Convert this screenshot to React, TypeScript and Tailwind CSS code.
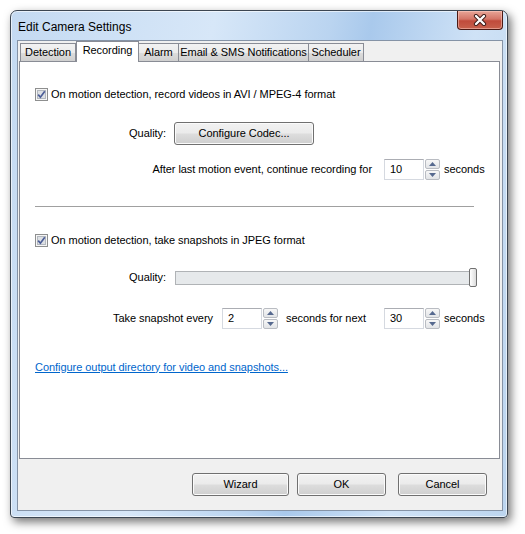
import React from "react";

const btnBg =
  "bg-[linear-gradient(to_bottom,#f2f2f2_0%,#ebebeb_48%,#dddddd_52%,#cfcfcf_100%)] shadow-[inset_0_0_0_1px_#fbfbfb]";

const CheckBox: React.FC = () => (
  <svg width="13" height="13" viewBox="0 0 13 13" className="shrink-0">
    <rect x="0.5" y="0.5" width="12" height="12" fill="#f6f6f6" stroke="#8e8f8f" />
    <rect x="2.5" y="2.5" width="8" height="8" fill="#dde0e4" stroke="#b3b8bf" />
    <path d="M3.2 6.6 L5.4 9.2 L9.8 3.2" fill="none" stroke="#4b5d97" strokeWidth="1.7" />
  </svg>
);

const Arrow: React.FC<{ up?: boolean }> = ({ up }) => (
  <svg width="7" height="4" viewBox="0 0 7 4">
    <path d={up ? "M0 4 L3.5 0 L7 4Z" : "M0 0 L3.5 4 L7 0Z"} fill="#56698f" />
  </svg>
);

const NumberField: React.FC<{ value: string }> = ({ value }) => (
  <div className="flex items-center">
    <div className="w-[40px] h-[21px] border border-[#d5d9e0] border-t-[#abadb3] bg-white flex items-center pl-[5px]">
      {value}
    </div>
    <div className="flex flex-col ml-[1px] w-[15px] h-[21px] gap-[1px]">
      <div className="flex-1 border border-[#b9bcc2] rounded-[2px] bg-[linear-gradient(to_bottom,#f7f7f7,#e2e4e7)] flex items-center justify-center">
        <Arrow up />
      </div>
      <div className="flex-1 border border-[#b9bcc2] rounded-[2px] bg-[linear-gradient(to_bottom,#f7f7f7,#e2e4e7)] flex items-center justify-center">
        <Arrow />
      </div>
    </div>
  </div>
);

const tabs = ["Detection", "Recording", "Alarm", "Email & SMS Notifications", "Scheduler"];
const tabWidths = [56, 63, 41, 131, 56];

export default function App() {
  return (
    <div className="w-[525px] h-[534px] bg-white pt-[10px] pl-[10px] font-['Liberation_Sans',Arial,sans-serif] text-[11px] tracking-[-0.05px] text-black">
      <div className="w-[498px] h-[508px] border border-[#3c4652] rounded-t-[7px] rounded-b-[4px] bg-[linear-gradient(100deg,#c4daf2_0%,#d7e7f8_35%,#bad4f0_55%,#a9c9ec_62%,#cfe2f6_80%,#bcd5ef_100%)] shadow-[3px_4px_10px_rgba(0,0,0,0.55),inset_0_0_0_1px_rgba(255,255,255,0.6)] flex flex-col">
        {/* title bar */}
        <div className="h-[29px] flex justify-between pl-[7px] pr-[4px]">
          <div className="text-[12px] tracking-normal self-center pt-[2px] text-black">Edit Camera Settings</div>
          <div className="w-[46px] h-[19px] border border-[#4b1a14] border-t-0 rounded-b-[4px] bg-[linear-gradient(to_bottom,#e8a597_0%,#d47567_45%,#c04b3b_55%,#c7614c_100%)] shadow-[inset_0_0_0_1px_rgba(255,210,200,0.5)] flex items-center justify-center">
            <svg width="14" height="12" viewBox="0 0 14 12">
              <path d="M3 2 L11 10 M11 2 L3 10" stroke="#3b1a16" strokeWidth="4.2" strokeLinecap="round" />
              <path d="M3 2 L11 10 M11 2 L3 10" stroke="#ffffff" strokeWidth="2.4" strokeLinecap="round" />
            </svg>
          </div>
        </div>

        {/* client */}
        <div className="flex-1 ml-[6px] mr-[4px] mb-[6px] border border-[#8593a6] bg-[#f0f0f0] flex flex-col pl-[1px] pr-[2px]">
          {/* tab strip */}
          <div className="h-[20px] flex items-end pl-[1px]">
            {tabs.map((t, i) =>
              i === 1 ? (
                <div
                  key={t}
                  style={{ width: tabWidths[i] }}
                  className="h-[21px] -mb-[1px] border border-b-0 border-[#898c95] bg-white flex items-center justify-center pb-[3px] relative z-10"
                >
                  {t}
                </div>
              ) : (
                <div
                  key={t}
                  style={{ width: tabWidths[i] }}
                  className="h-[18px] border border-b-0 border-[#898c95] -ml-[1px] first:ml-0 bg-[linear-gradient(to_bottom,#f2f2f2_0%,#ebebeb_50%,#dddddd_50%,#cfcfcf_100%)] flex items-center justify-center"
                >
                  {t}
                </div>
              )
            )}
          </div>

          {/* tab panel */}
          <div className="h-[398px] border border-[#898c95] bg-white flex flex-col pl-[15px]">
            <div className="mt-[26px] h-[13px] flex items-center gap-[3px]">
              <CheckBox />
              <span>On motion detection, record videos in AVI / MPEG-4 format</span>
            </div>

            <div className="mt-[21px] flex items-center -ml-[15px]">
              <div className="w-[146px] text-right">Quality:</div>
              <div className={`ml-[8px] w-[140px] h-[23px] border border-[#707070] rounded-[3px] flex items-center justify-center ${btnBg}`}>
                Configure Codec...
              </div>
            </div>

            <div className="mt-[14px] flex items-center justify-end pr-[16px]">
              <span className="mr-[12px]">After last motion event, continue recording for</span>
              <NumberField value="10" />
              <span className="ml-[4px] w-[39px]">seconds</span>
            </div>

            <div className="mt-[26px] h-[1px] bg-[#a0a0a0] mr-[25px]" />

            <div className="mt-[27px] h-[13px] flex items-center gap-[3px]">
              <CheckBox />
              <span>On motion detection, take snapshots in JPEG format</span>
            </div>

            <div className="mt-[21px] flex items-center -ml-[15px]">
              <div className="w-[146px] text-right">Quality:</div>
              <div className="ml-[9px] w-[302px] h-[19px] flex items-center">
                <div className="flex-1 h-[14px] border border-[#b0b3b6] bg-[#e6e9eb]" />
                <div className="w-[8px] h-[19px] -ml-[7px] border border-[#707070] rounded-[2px] bg-[linear-gradient(to_right,#ffffff,#dcdcdc)]" />
              </div>
            </div>

            <div className="mt-[21px] flex items-center justify-end pr-[16px]">
              <span className="mr-[9px]">Take snapshot every</span>
              <NumberField value="2" />
              <span className="w-[106px] pl-[8px]">seconds for next</span>
              <NumberField value="30" />
              <span className="ml-[4px] w-[39px]">seconds</span>
            </div>

            <div className="mt-[31px] h-[14px] flex items-center">
              <span className="text-[#0066cc] underline">Configure output directory for video and snapshots...</span>
            </div>
          </div>

          {/* buttons */}
          <div className="flex-1 flex items-center justify-end pr-[13px]">
            <div className={`w-[97px] h-[23px] border border-[#707070] rounded-[3px] flex items-center justify-center ${btnBg}`}>Wizard</div>
            <div className={`ml-[8px] w-[89px] h-[23px] border border-[#707070] rounded-[3px] flex items-center justify-center ${btnBg}`}>OK</div>
            <div className={`ml-[12px] w-[89px] h-[23px] border border-[#707070] rounded-[3px] flex items-center justify-center ${btnBg}`}>Cancel</div>
          </div>
        </div>
      </div>
    </div>
  );
}
